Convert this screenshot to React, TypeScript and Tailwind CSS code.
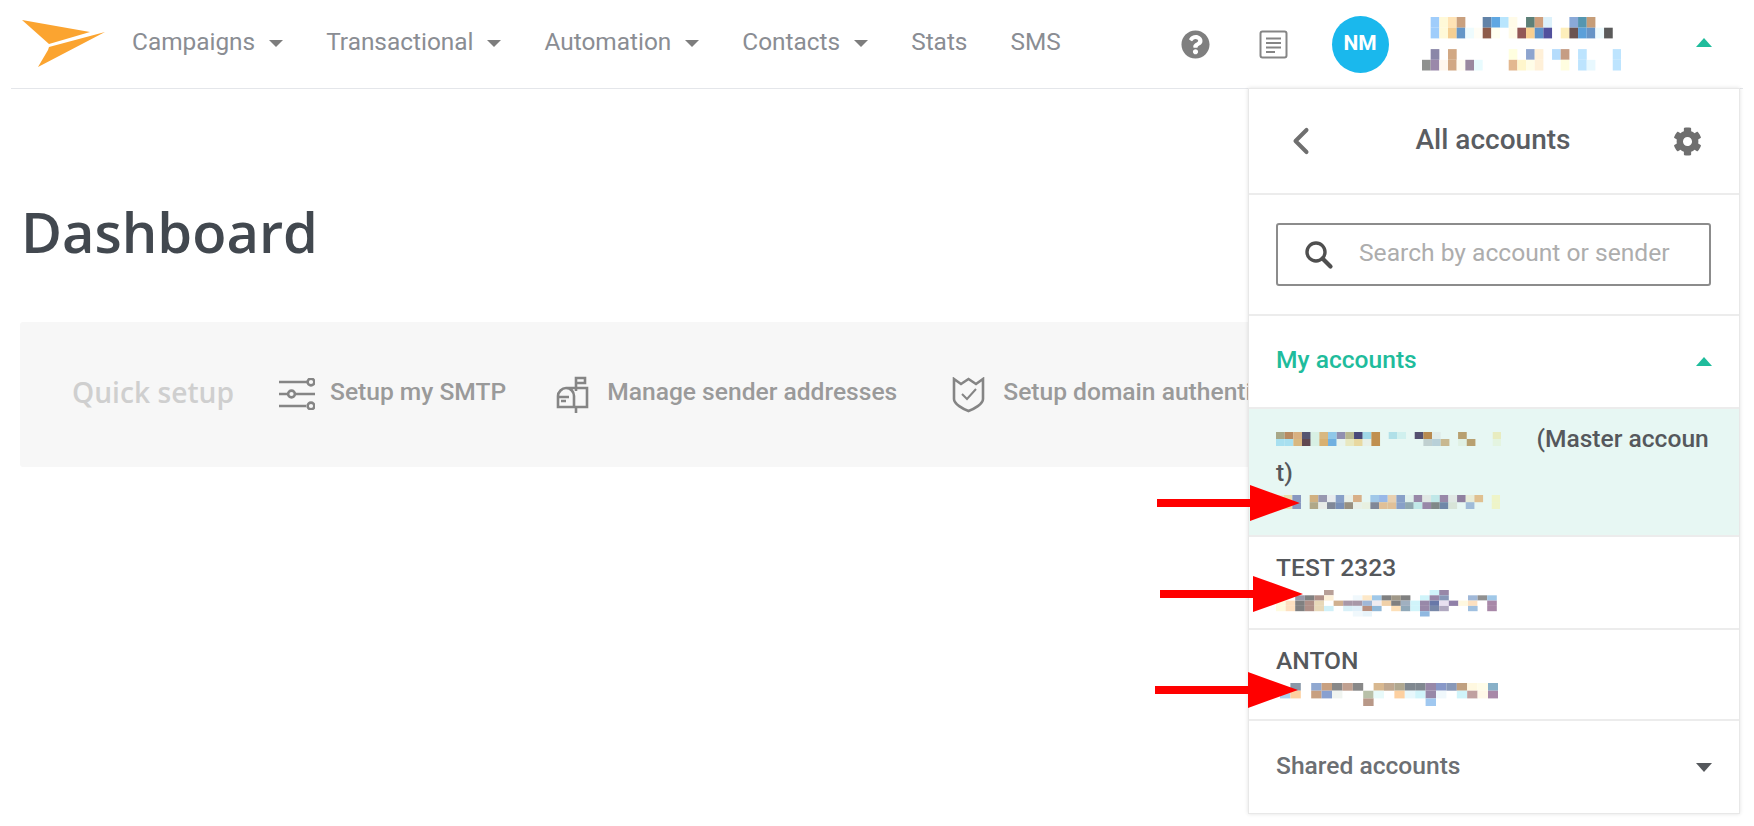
import React from 'react';
import { ChevronLeft } from 'lucide-react';
import { FaCog, FaQuestionCircle } from 'react-icons/fa';

// censored text in the reference is drawn as colour blocks
const Mosaic: React.FC<{ rows: string[][]; cellW: number; cellH: number; className?: string }> = ({ rows, cellW, cellH, className }) => {
    const cols = Math.max(...rows.map(r => r.length));
    return (
        <svg width={cols * cellW} height={rows.length * cellH} className={className} style={{ filter: 'blur(0.6px)' }}>
            {rows.map((row, y) =>
                row.map((c, x) => (c ? <rect key={`${x}-${y}`} x={x * cellW} y={y * cellH} width={cellW} height={cellH} fill={c} /> : null))
            )}
        </svg>
    );
};

const userRows = [
    ['', '#a0cdfb', '#fff9d8', '#ffe3b5', '#c9a07e', '', '', '#6283a8', '#5fa7e2', '#b8e5fd', '#fffbe8', '', '#5d8078', '#cf9f7c', '#dcf1fb', '', '', '#8aa9d8', '#5596b0', '#c69d78'],
    ['', '#9fcdfb', '#fff9d8', '#f5cf93', '#6596c7', '#eefbfd', '#fffdf5', '#8e5c4a', '#fffff0', '', '#fffbe8', '#935756', '#f9cf90', '#5f93c9', '#52519d', '', '#fdeebb', '#6b5350', '#5a9fd9', '#6794c6', '#edfafd', '#5a5a5a'],
    ['', '', '', '', '', '', '', '', '', '', '', '', '', '', '', '', '', '', '', '', '', '', ''],
    ['', '#8a87a8', '', '#d1a884', '', '', '', '', '', '', '#ffffe0', '', '#8da4cf', '#fff0d8', '', '#b5dcfc', '#c69d84', '', '#bde4fe', '', '', '', '#bde4fe'],
    ['#8f918f', '#9a88aa', '#fff7ee', '#d1a884', '#fffcf2', '#9a889f', '#e8fbfe', '', '', '', '#e3b890', '#fff6cc', '#fffde8', '#fff0d8', '', '', '#fffde0', '', '#bde4fe', '#e8f8fe', '', '', '#bde4fe']
];

const masterName = [
    ['#a8a888', '#b88a60', '#d8b080', '#555570', '#d8f0e4', '#d8b880', '#90c8e8', '#9090b0', '#b8b890', '#484878', '#a0d8e8', '#c09050', '', '#b0e0e8', '#d0f0ee', '', '#555070', '#b88a50', '#e0ecea', '', '', '#b8a070', '', '', '', '#e8ecc0'],
    ['#a8e0f0', '#a8e0f0', '#d8b880', '#604850', '#d8f0e4', '#d8b070', '#70b0e0', '#e8f4ee', '#e8e8c0', '#e8d8a0', '#e8f0e8', '#c09050', '', '', '', '', '', '#c0d0d0', '#b8d0d8', '#c8b890', '', '#e0f0e4', '#b8a070', '', '', '#e4f4e0']
];
const masterMail = [
    ['#e8ecd8', '#e8e0b0', '#8898c0', '', '#d0b080', '#9898b0', '#e8ecee', '#88a0c8', '#e8f0e8', '#d8b088', '', '#a0c8e8', '#98b8e8', '#e8d0b0', '#88a0c8', '#e0f0ec', '#9888a8', '#e0e8e4', '#c0e8e8', '#9888a8', '#e0e8e4', '#9080a0', '#e8ecd8', '#e0c090', '', '#eef4c8'],
    ['#a0c8e8', '#e8e0b0', '#8898c0', '', '#b0a888', '#e8ece8', '#808898', '#7890b8', '#989080', '#e8f0e8', '#e8f0e0', '#808898', '#e0c098', '#e0c098', '#88a0c8', '#90a8b0', '#c0e8e8', '#9888a8', '#808888', '#7088a8', '#d8e4d8', '', '#a0bcd8', '', '', '#eef4c8']
];
const testMail = [
    ['', '', '', '', '', '#b8a098', '', '', '', '', '', '', '', '', '', '', '#d0f4fa', '#9888a8', '', '', '', '', '', ''],
    ['', '', '#9898a8', '#808080', '#b09088', '#fdf0d8', '', '', '#f0f8fc', '#fde8c8', '#a0c8e8', '#808080', '#a09888', '#808080', '', '#d0f4fa', '#9888a8', '#8898b8', '', '', '#a0b8d8', '#909090', '#a0c8e8'],
    ['#fffbe0', '#fde0c0', '#808080', '#b09088', '#e8d8b8', '', '#d0b090', '#a898a8', '#a898a8', '#a0b8d8', '#f0ecf0', '#f0d0a8', '#808080', '#a0b0c0', '#d0f4fa', '#9888a8', '#6878a8', '#e8e0f0', '#9080a8', '#fff8e0', '#fde0c0', '#fff', '#a888a8'],
    ['#fffbe0', '#fde0c0', '#808080', '#b09088', '#e8d8b8', '#d0f0f8', '', '#d8f0f8', '#e0f0fa', '#b89080', '#90b8d8', '', '#fde0b8', '#90a8b8', '#d0f4fa', '#9888a8', '#7888a8', '#b0a8c0', '', '', '#a0c0e0', '', '#a888a8'],
    ['', '', '', '', '', '', '', '', '#f0f8fc', '#e8f4fa', '', '', '', '', '', '#90b8e0', '', '', '', '', '', '', '']
];
const antonMail = [
    ['', '#8898a8', '', '#90a8d0', '#c8a080', '#888888', '#c0a090', '#888888', '', '#d8b890', '#c0a890', '#b0a890', '#808890', '#808890', '#9888a8', '#8898c8', '#8898b8', '#c0a080', '#fff8e0', '#fffce8', '#88b0c8'],
    ['#a8d0f0', '#fdd0a0', '', '#c8a080', '#88a0d0', '#f0f4f0', '', '', '#b8c0a8', '#e8fafa', '', '#fdd0a0', '#e8f8fc', '#d0f4fa', '#9888a8', '#f0f8fc', '', '#d0f4fa', '#c0a0a0', '#fff8e8', '#a888a8'],
    ['', '', '', '', '', '', '', '', '#b89888', '', '', '', '', '', '#a0c8f0', '', '', '', '', '', '']
];

const NavItem: React.FC<{ label: string; caret?: boolean }> = ({ label, caret }) => (
    <div className="flex items-center">
        <span>{label}</span>
        {caret && <span className="ml-[14px] mt-[3px] h-0 w-0 border-x-[7px] border-t-[7px] border-x-transparent border-t-[#7d7d7d]" />}
    </div>
);

const SetupLink: React.FC<{ icon: React.ReactNode; label: string; className: string }> = ({ icon, label, className }) => (
    <div className={`flex items-center shrink-0 ${className}`}>
        {icon}
        <span className="-mt-[4px]">{label}</span>
    </div>
);

const Arrow: React.FC<{ className: string }> = ({ className }) => (
    <svg width="143" height="36" viewBox="0 0 143 36" className={`absolute z-30 ${className}`}>
        <path d="M0 14h93V0l50 18-50 18V22H0z" fill="#ff0000" />
    </svg>
);

export default function App() {
    return (
        <div className="relative h-[826px] w-[1754px] overflow-hidden bg-white font-['Roboto',sans-serif]">
            <header className="mx-[11px] flex h-[89px] items-center border-b border-[#e4e6ea]">
                <svg width="84" height="48" viewBox="0 0 84 48" className="ml-[11px] mb-[3px] shrink-0">
                    <path d="M0 1l68 12-41 12z" fill="#fba430" />
                    <path d="M83 13L16 48l10-17 1-3z" fill="#fba430" />
                </svg>
                <nav className="ml-[26px] mb-[3px] flex gap-[43px] text-[24.4px] text-[#8a8d93]">
                    <NavItem label="Campaigns" caret />
                    <NavItem label="Transactional" caret />
                    <NavItem label="Automation" caret />
                    <NavItem label="Contacts" caret />
                    <NavItem label="Stats" />
                    <NavItem label="SMS" />
                </nav>
                <div className="ml-auto flex items-center">
                    <FaQuestionCircle className="mr-[49px] text-[#7f7f7f]" size={29} />
                    <svg width="29" height="29" viewBox="0 0 29 29" fill="none" stroke="#858585" strokeWidth="2" className="mr-[44px]">
                        <rect x="1.5" y="1.5" width="26" height="26" rx="2" />
                        <path d="M7 8.5h15M7 13h15M7 17.5h15M7 22h9" />
                    </svg>
                    <div className="flex h-[57px] w-[57px] items-center justify-center rounded-full bg-[#1ab8ed] text-[21px] font-bold text-white">NM</div>
                    <Mosaic rows={userRows} cellW={8.67} cellH={10.7} className="ml-[33px] mr-[75px]" />
                    <span className="mr-[31px] mb-[3px] h-0 w-0 border-x-[8px] border-b-[9px] border-x-transparent border-b-[#1fbc9c]" />
                </div>
            </header>

            <main className="px-[20px]">
                <h1 className="mt-[107px] h-[72px] pl-[1px] font-['Open_Sans',sans-serif] text-[56px] leading-[70px] font-semibold text-[#42484f]">Dashboard</h1>
                <div className="mt-[54px] flex h-[145px] items-center overflow-hidden rounded-[3px] bg-[#f7f7f7] pl-[52px] text-[24.6px] font-medium whitespace-nowrap text-[#9a9a9a]">
                    <span className="-mt-[4px] shrink-0 font-['Open_Sans',sans-serif] text-[28.2px] font-semibold text-[#cfcfcf]">Quick setup</span>
                    <SetupLink
                        className="ml-[45px] gap-[15px]"
                        label="Setup my SMTP"
                        icon={
                            <svg width="36" height="32" viewBox="0 0 36 32" fill="none" stroke="#858585" strokeWidth="2.6">
                                <path d="M0 4h28M0 16h8M17 16h19M0 28h27" />
                                <circle cx="32" cy="4" r="3.4" />
                                <circle cx="12.5" cy="16" r="3.4" />
                                <circle cx="32" cy="28" r="3.4" />
                            </svg>
                        }
                    />
                    <SetupLink
                        className="ml-[50px] gap-[18px]"
                        label="Manage sender addresses"
                        icon={
                            <svg width="33" height="38" viewBox="0 0 33 38" fill="none" stroke="#858585" strokeWidth="2.6">
                                <path d="M20 15V2h9v5h-9M20 12h11v19H2V20c0-4 4-8 8-8h10M10 12c5 0 8 4 8 8v11M2 21h11M5 25h5M20 31v6" />
                            </svg>
                        }
                    />
                    <SetupLink
                        className="ml-[55px] gap-[18px]"
                        label="Setup domain authentication"
                        icon={
                            <svg width="33" height="36" viewBox="0 0 33 36" fill="none" stroke="#858585" strokeWidth="2.6">
                                <path d="M2 2l7 5 7.500-5 7.500 5 7-5v20c0 5-9 10-14.500 12C11 32 2 27 2 22z" />
                                <path d="M10 17l5 5 9-10" strokeWidth="2" />
                            </svg>
                        }
                    />
                </div>
            </main>

            {/* account menu */}
            <aside className="absolute top-[88px] left-[1248px] z-20 w-[492px] border border-[#e8e8e8] bg-white shadow-[0_0_4px_rgba(0,0,0,0.12)]">
                <div className="relative flex h-[106px] items-center justify-between border-b-2 border-[#ececec] px-[40px] text-[#6f6f6f]">
                    <ChevronLeft size={44} strokeWidth={2.2} className="-ml-[10px]" />
                    <span className="mr-[10px] mb-[2px] text-[28px] font-medium text-[#5a5d62]">All accounts</span>
                    <FaCog size={29} className="-mr-[3px]" />
                </div>
                <div className="flex h-[121px] items-center border-b-2 border-[#ececec] pr-[28px] pl-[27px]">
                    <div className="flex h-[63px] w-full items-center rounded-[3px] border-2 border-[#8c8c8c] pl-[26px]">
                        <svg width="30" height="30" viewBox="0 0 30 30" fill="none" stroke="#4f4f4f" className="shrink-0">
                            <circle cx="12" cy="12" r="9" strokeWidth="3.4" />
                            <path d="M18.500 18.500l8 8" strokeWidth="4.200" strokeLinecap="round" />
                        </svg>
                        <span className="ml-[25px] mb-[2px] text-[24.6px] text-[#adadad]">Search by account or sender</span>
                    </div>
                </div>
                <div className="flex h-[93px] items-center justify-between border-b-2 border-[#ececec] pr-[27px] pl-[27px] text-[24.6px] font-medium text-[#1fbc9c]">
                    <span className="mb-[2px]">My accounts</span>
                    <span className="h-0 w-0 border-x-[8px] border-b-[9px] border-x-transparent border-b-[#1fbc9c]" />
                </div>
                <div className="h-[128px] border-b-2 border-[#ececec] bg-[#e7f7f3] pt-[13px] pl-[27px] text-[24.6px] leading-[34px] font-medium text-[#55585c]">
                    <div className="flex items-center">
                        <Mosaic rows={masterName} cellW={8.67} cellH={7} />
                        <span className="ml-[35px] whitespace-nowrap">(Master accoun</span>
                    </div>
                    <div>t)</div>
                    <Mosaic rows={masterMail} cellW={8.67} cellH={7.2} className="-ml-px mt-[5px]" />
                </div>
                <div className="h-[93px] border-b-2 border-[#ececec] pt-[14px] pl-[27px] text-[24.6px] leading-[34px] font-medium text-[#55585c]">
                    <div>TEST 2323</div>
                    <Mosaic rows={testMail} cellW={9.6} cellH={5.3} className="mt-[5px]" />
                </div>
                <div className="h-[91px] border-b-2 border-[#ececec] pt-[14px] pl-[27px] text-[24.6px] leading-[34px] font-medium text-[#55585c]">
                    <div>ANTON</div>
                    <Mosaic rows={antonMail} cellW={10.4} cellH={7.7} className="mt-[5px] ml-[4px]" />
                </div>
                <div className="flex h-[92px] items-center justify-between pr-[27px] pl-[27px] text-[24.6px] font-medium text-[#6c6f73]">
                    <span className="mb-[2px]">Shared accounts</span>
                    <span className="h-0 w-0 border-x-[8px] border-t-[9px] border-x-transparent border-t-[#55585c]" />
                </div>
            </aside>

            <Arrow className="top-[485px] left-[1157px]" />
            <Arrow className="top-[576px] left-[1160px]" />
            <Arrow className="top-[672px] left-[1155px]" />
        </div>
    );
}
